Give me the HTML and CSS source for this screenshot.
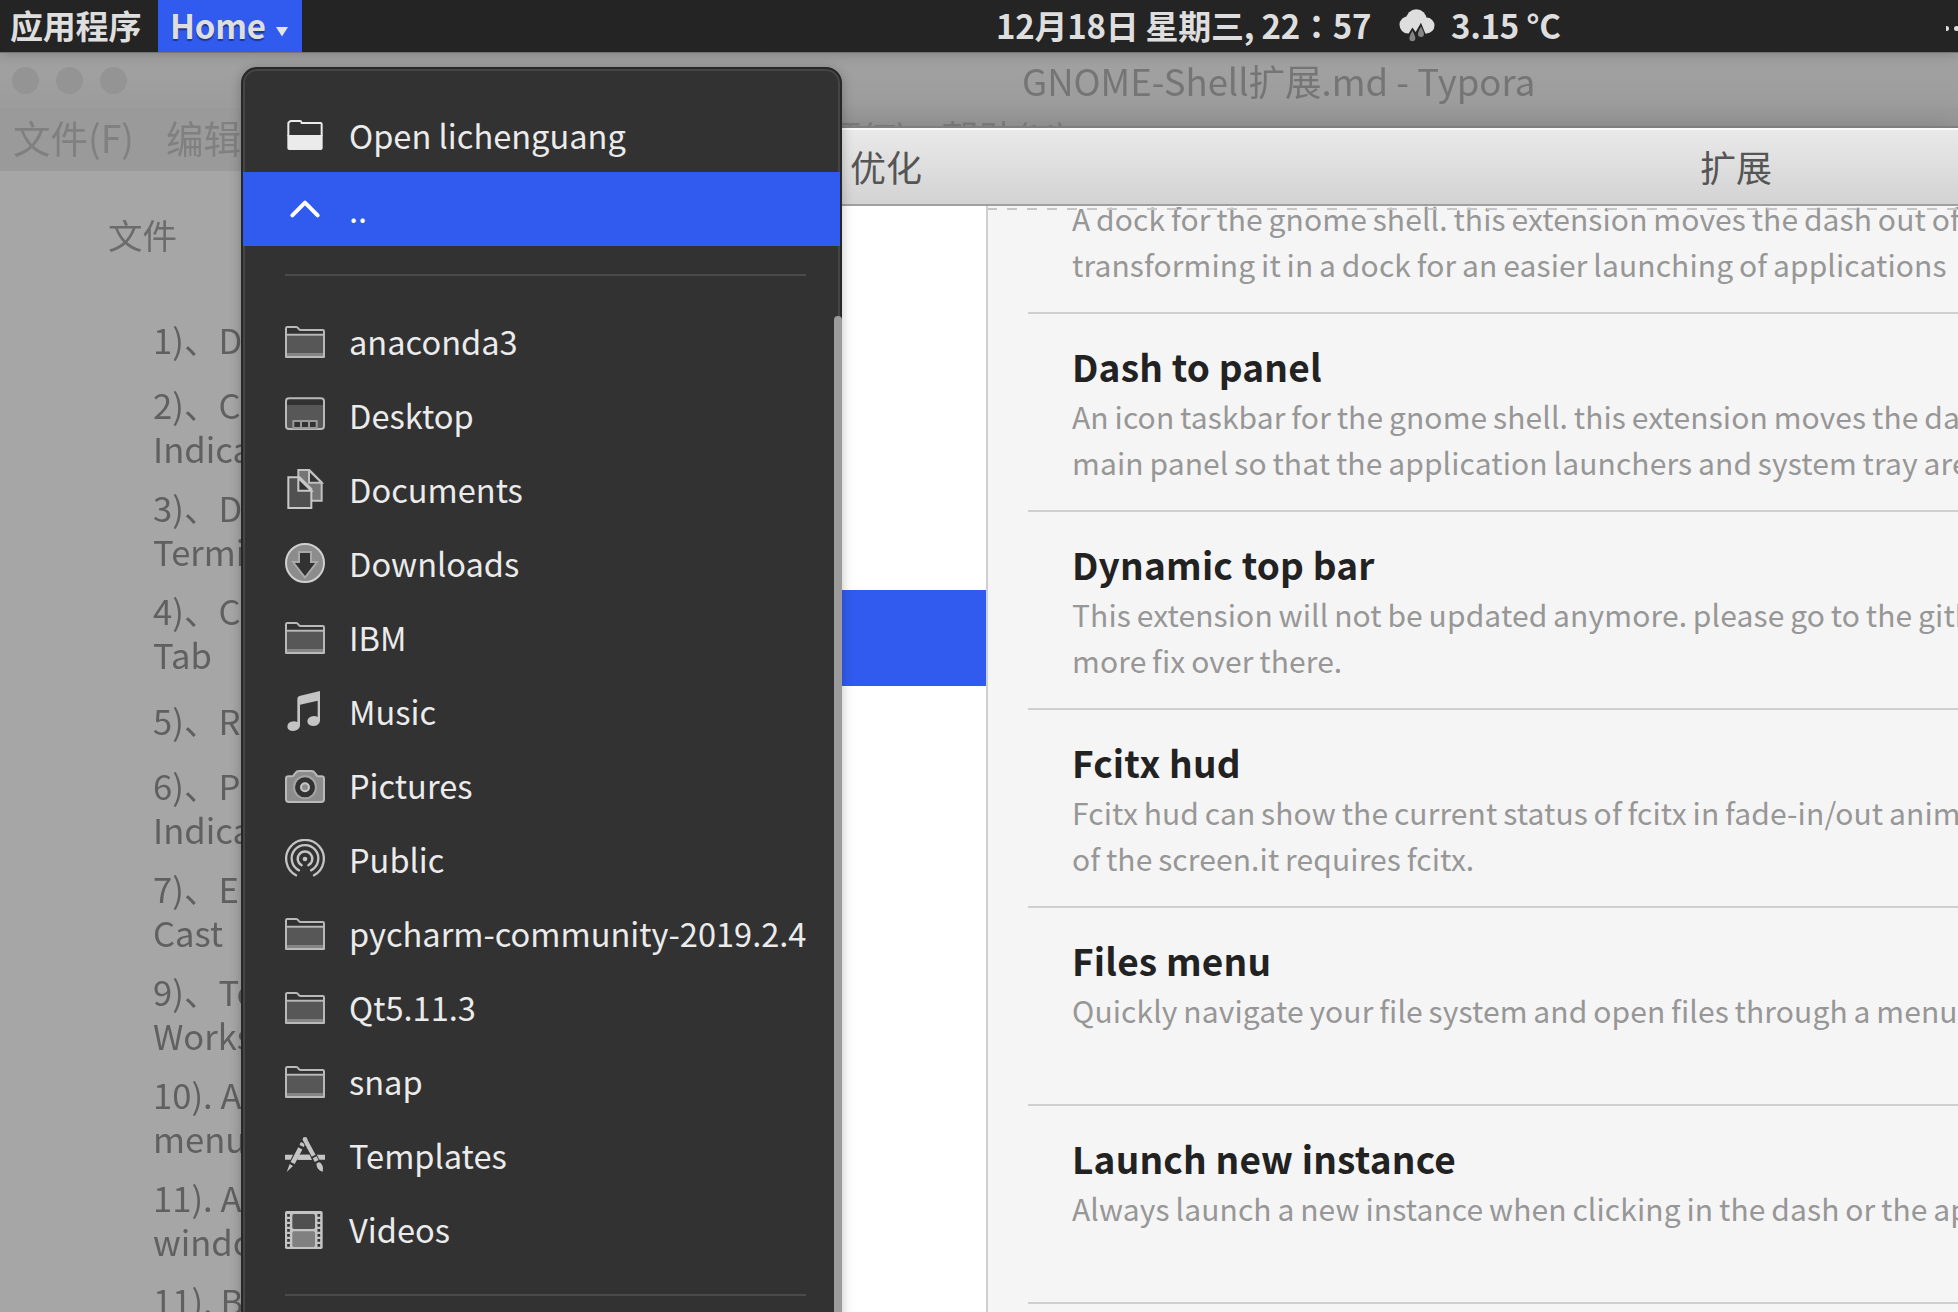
FILE: index.html
```html
<!DOCTYPE html>
<html lang="zh-CN"><head><meta charset="utf-8"><title>Desktop</title><link rel="stylesheet" href="styles.css"></head>
<body>
<svg class="defs" aria-hidden="true"><defs>
<symbol id="folder" viewBox="0 0 120 120"><path d="M6 44H114V97H6Z" fill="#575757"/><path d="M6 96H114V105H6Z" fill="#858585"/><path d="M3 108V22Q3 18 7 18H33Q38 18 40 22Q42 27 47 27H113Q117 27 117 31V108ZM3 41H117M3 108H117" fill="none" stroke="#b9b9b9" stroke-width="6" stroke-linejoin="round"/></symbol>
</defs></svg>
<div class="desktop">
  <header class="panel">
    <span class="panel-item apps">应用程序</span>
    <span class="panel-item home">Home<svg class="caret" viewBox="0 0 12 10"><path d="M0 0H12L6 9.500Z" fill="#e4e4ee"/></svg></span>
    <div class="clock"><span class="date">12月18日 星期三, 22<span class="colon" lang="ja">：</span>57</span>
      <svg class="weather" viewBox="0 0 108 100"><g fill="#dedede"><circle cx="27" cy="48" r="26"/><circle cx="52" cy="32" r="31"/><circle cx="83" cy="50" r="24"/><path d="M27 45H83V74H27Z"/></g><path d="M25 80L40 56L50 70L66 42L80 76L74 90H30Z" fill="#242424"/><path d="M40 66Q31 82 31 89A9 9 0 0 0 49 89Q49 82 40 66ZM66 53Q57 69 57 76A9 9 0 0 0 75 76Q75 69 66 53Z" fill="#858585"/></svg>
      <span class="temp">3.15 °C</span></div>
    <span class="tray"><i></i><i></i></span>
  </header>
  <section class="editor">
    <div class="editor-title"><span class="dots"><i></i><i></i><i></i></span><span class="editor-name">GNOME-Shell扩展.md - Typora</span></div>
    <div class="editor-menu"><span>文件(F)</span><span>编辑(E)</span><span>段落(P)</span><span>格式(O)</span><span>视图(V)</span><span>主题(T)</span><span>帮助(H)</span></div>
    <div class="outline"><h2>文件</h2>
      <ul><li>1)、D</li><li>2)、C<br>Indica</li><li>3)、D<br>Termi</li><li>4)、C<br>Tab</li><li>5)、R</li><li>6)、P<br>Indica</li><li>7)、E<br>Cast</li><li>9)、To<br>Works</li><li>10). A<br>menu</li><li>11). A<br>windo</li><li>11). B</li></ul>
    </div>
  </section>
  <section class="tweaks">
    <div class="tweaks-head"><span class="app-name">优化</span><span class="page-name">扩展</span></div>
    <div class="tweaks-body">
      <nav class="side"><div class="side-selected"></div></nav>
      <main class="extensions">
        <article><p>A dock for the gnome shell. this extension moves the dash out of<br>transforming it in a dock for an easier launching of applications</p></article>
        <article><h3>Dash to panel</h3><p>An icon taskbar for the gnome shell. this extension moves the dash<br>main panel so that the application launchers and system tray are</p></article>
        <article><h3>Dynamic top bar</h3><p>This extension will not be updated anymore. please go to the github<br>more fix over there.</p></article>
        <article><h3>Fcitx hud</h3><p>Fcitx hud can show the current status of fcitx in fade-in/out anima<br>of the screen.it requires fcitx.</p></article>
        <article><h3>Files menu</h3><p>Quickly navigate your file system and open files through a menu</p></article>
        <article><h3>Launch new instance</h3><p>Always launch a new instance when clicking in the dash or the app</p></article>
      </main>
    </div>
  </section>
  <aside class="menu">
    <div class="row"><svg viewBox="0 0 120 120"><path d="M7 60H113V99Q113 105 107 105H13Q7 105 7 99Z" fill="#ebebeb"/><path d="M10 64V25Q10 22 13 21Q15 18 19 18H46Q49 18 50 24H107Q110 24 110 28V64" fill="none" stroke="#ebebeb" stroke-width="6"/></svg><span>Open lichenguang</span></div>
    <div class="row selected"><svg viewBox="0 0 120 120"><path d="M22 79L60 41L98 79" fill="none" stroke="#fff" stroke-width="12" stroke-linecap="round" stroke-linejoin="round"/></svg><span>..</span></div>
    <hr>
    <div class="row"><svg><use href="#folder"/></svg><span>anaconda3</span></div>
    <div class="row"><svg viewBox="0 0 120 120"><path d="M6 30H114V101H6Z" fill="#575757"/><rect x="3" y="10" width="114" height="92" rx="9" fill="none" stroke="#b9b9b9" stroke-width="6"/><rect x="25" y="78" width="70" height="21" fill="#323232" stroke="#999" stroke-width="6"/><path d="M48 80V98M72 80V98" stroke="#999" stroke-width="6"/></svg><span>Desktop</span></div>
    <div class="row"><svg viewBox="0 0 120 120"><path d="M40 3H73L110 40V95H40Z" fill="#757575" stroke="#c0c0c0" stroke-width="6"/><path d="M72 4V41H110Z" fill="#323232" stroke="#c0c0c0" stroke-width="6"/><path d="M10 25H44L79 60V117H10Z" fill="#505050" stroke="#c8c8c8" stroke-width="6"/><path d="M40 27V65H79Z" fill="#323232" stroke="#c8c8c8" stroke-width="6"/></svg><span>Documents</span></div>
    <div class="row"><svg viewBox="0 0 120 120"><circle cx="60" cy="60" r="57" fill="#8c8c8c" stroke="#d0d0d0" stroke-width="6"/><path d="M42 27H78V57H96L60 104L24 57H42Z" fill="#323232" stroke="#a9a9a9" stroke-width="6"/></svg><span>Downloads</span></div>
    <div class="row"><svg><use href="#folder"/></svg><span>IBM</span></div>
    <div class="row"><svg viewBox="0 0 120 120"><path d="M37 24Q37 17 43 15L105 0V90Q102 105 84 105Q67 103 67 90Q69 76 87 75Q94 75 98 78V29L45 41V105Q42 119 24 120Q8 119 7 107Q8 92 26 91Q33 91 37 93Z" fill="#c4c4c4"/></svg><span>Music</span></div>
    <div class="row"><svg viewBox="0 0 120 120"><path d="M3 103V41Q3 34 11 34H21Q24 34 26 31L31 24Q35 18 42 18H79Q86 18 90 24L95 31Q97 34 100 34H109Q117 34 117 41V103Q117 111 109 111H11Q3 111 3 103Z" fill="#8c8c8c" stroke="#b9b9b9" stroke-width="6"/><circle cx="60" cy="67" r="33" fill="#323232" stroke="#a5a5a5" stroke-width="6"/><circle cx="60" cy="67" r="12" fill="#8c8c8c" stroke="#c8c8c8" stroke-width="6"/></svg><span>Pictures</span></div>
    <div class="row"><svg viewBox="0 0 120 120"><circle cx="60" cy="60" r="7" fill="#c4c4c4"/><g fill="none" stroke="#c4c4c4" stroke-width="7" stroke-linecap="round"><path d="M50 79A22 22 0 1 1 70 79"/><path d="M42 94A40 40 0 1 1 78 94"/><path d="M33 109A56.500 56.500 0 1 1 87 109"/></g></svg><span>Public</span></div>
    <div class="row"><svg><use href="#folder"/></svg><span>pycharm-community-2019.2.4</span></div>
    <div class="row"><svg><use href="#folder"/></svg><span>Qt5.11.3</span></div>
    <div class="row"><svg><use href="#folder"/></svg><span>snap</span></div>
    <div class="row"><svg viewBox="0 0 120 120"><path d="M0 59H120V74H0Z" fill="#c4c4c4"/><g fill="none" stroke-linecap="butt"><path d="M53 22L18 95M60 14L98 86" stroke="#323232" stroke-width="20"/><path d="M54 24L50 33M46 40L23 84" stroke="#c4c4c4" stroke-width="14"/><path d="M60 14L88 65" stroke="#323232" stroke-width="18"/><path d="M60 14L86 62" stroke="#c4c4c4" stroke-width="13"/><path d="M89 67L95 78" stroke="#c4c4c4" stroke-width="13"/><path d="M42 59H74L80 74H36Z" fill="#c4c4c4"/></g><circle cx="60" cy="13" r="7" fill="#c4c4c4"/><path d="M14 87L24 93L5 111ZM94 87Q100 79 107 84Q117 94 113 110Q96 106 94 87Z" fill="#c4c4c4"/></svg><span>Templates</span></div>
    <div class="row"><svg viewBox="0 0 120 120"><rect x="0" y="6" width="113" height="114" rx="5" fill="#c4c4c4"/><rect x="22" y="15" width="68" height="45" rx="5" fill="#505050"/><rect x="22" y="67" width="68" height="47" rx="5" fill="#808080"/><path d="M10.500 15V117M101.500 15V117" stroke="#323232" stroke-width="8" stroke-dasharray="8 7"/></svg><span>Videos</span></div>
    <hr>
    <div class="scrollbar"></div>
  </aside>
</div>
</body></html>
```

FILE: styles.css
```css
* { box-sizing: border-box; }
body { margin: 0; overflow: hidden; font-family: "Noto Sans CJK SC", sans-serif; }
h2, h3, p, ul { margin: 0; padding: 0; font-weight: 400; }
i { display: block; border-radius: 50%; }
.defs { position: absolute; width: 0; height: 0; }
.desktop { position: relative; width: 1958px; height: 1312px; overflow: hidden; background: #a6a6a6; }

.panel { position: absolute; inset: 0 0 auto; z-index: 5; height: 52px; display: flex; align-items: center; background: #242424; color: #dedede; font-size: 33px; font-weight: 700; line-height: 50px; box-shadow: 0 1px 0 #747474, 0 2px 12px rgba(0,0,0,.22); white-space: nowrap; }
.panel-item { height: 52px; }
.apps { width: 158px; padding-left: 10px; letter-spacing: -.2px; }
.home { width: 144px; padding-left: 12px; background: #315bef; text-shadow: 0 2px 1px rgba(0,0,0,.4); letter-spacing: -.2px; display: flex; align-items: flex-start; }
.caret { width: 12px; height: 10px; margin: 27px 0 0 10px; }
.clock { display: flex; align-items: center; height: 52px; margin-left: 694px; }
.date { width: 374px; letter-spacing: -.25px; margin-top: -2px; }
.colon { font-family: "Noto Sans CJK JP", sans-serif; }
.weather { width: 36px; height: 33px; margin: -1px 0 0 29px; }
.temp { margin: -2px 0 0 16px; letter-spacing: -.3px; }
.tray { display: flex; gap: 5px; margin-left: auto; margin-top: 5px; width: 12px; overflow: hidden; }
.tray i { width: 5px; height: 5px; background: #dedede; flex: none; }
.tray i:first-child { width: 3px; border-radius: 0 3px 3px 0; }

.editor { position: absolute; inset: 52px 0 0; background: #a6a6a6; color: #606060; }
.editor-title { height: 56px; display: flex; align-items: center; background: linear-gradient(#a2a2a2, #9c9c9c); }
.dots { display: flex; gap: 17px; padding-left: 12px; width: 1022px; filter: blur(.6px); }
.dots i { width: 27px; height: 27px; background: #949494; }
.editor-name { font-size: 36.5px; line-height: 56px; color: #757575; filter: blur(.7px); white-space: nowrap; padding-top: 2px; }
.editor-menu { height: 63px; display: flex; align-items: center; padding: 0 0 7px 13px; background: #9a9a9a; font-size: 37.5px; color: #808080; filter: blur(.7px); white-space: nowrap; }
.editor-menu span { width: 155px; }
.editor-menu span:first-child { width: 153px; }
.outline { padding-left: 153px; font-size: 34.6px; line-height: 44px; filter: blur(.7px); }
.outline h2 { margin: 39px 0 52px -45px; font-size: 34.5px; line-height: 48px; color: #6c6c6c; }
.outline ul { list-style: none; }
.outline li { min-height: 57px; margin-bottom: 15px; display: flex; flex-direction: column; justify-content: center; white-space: nowrap; }
.outline li:last-child { justify-content: flex-start; }

.tweaks { position: absolute; inset: 126px 0 0 800px; background: #fff; border-top: 2px solid #7f7f7f; display: flex; flex-direction: column; box-shadow: 0 0 24px rgba(0,0,0,.16); }
.tweaks-head { height: 78px; flex: none; display: flex; align-items: center; padding-bottom: 2px; border-top: 2px solid #fafafa; border-bottom: 2px solid #a0a0a0; background: linear-gradient(#e9e9e9, #d3d3d3); color: #555; font-size: 36px; }
.app-name { width: 900px; padding-left: 50px; }
.tweaks-body { flex: 1; display: flex; min-height: 0; }
.side { width: 186px; padding-top: 384px; }
.side-selected { height: 96px; background: #315bef; }
.extensions { position: relative; flex: 1; min-width: 0; overflow: hidden; background: #f5f5f5; border-left: 2px solid #cfcfcf; padding-left: 40px; }
.extensions::before { content: ""; position: absolute; left: 0; right: 0; top: 2px; height: 2px; background: repeating-linear-gradient(90deg, #c6c6c6 0 9px, transparent 9px 19px, #c6c6c6 19px 20px); }
.extensions article { display: flow-root; height: 198px; padding: 26px 0 0 44px; border-bottom: 2px solid #cfcfcf; white-space: nowrap; }
.extensions article:first-child { height: 108px; padding-top: 0; }
.extensions article:first-child p { margin-top: -11px; }
.extensions h3 { font-size: 37px; line-height: 53px; font-weight: 700; color: #222; letter-spacing: .2px; }
.extensions p { font-size: 30px; line-height: 46px; color: #979797; letter-spacing: .12px; word-spacing: -1.1px; }

.menu { position: absolute; left: 241px; top: 67px; width: 601px; height: 1300px; z-index: 4; padding: 29px 0 0; background: #323232; border: 2px solid #272727; border-radius: 16px 16px 0 0; box-shadow: inset 0 0 0 2px #454545, 0 2px 12px rgba(0,0,0,.25); color: #ebebeb; }
.row { height: 74px; display: flex; align-items: center; gap: 24px; padding-left: 42px; font-size: 32.6px; line-height: 74px; white-space: nowrap; }
.row svg { width: 40px; height: 40px; flex: none; }
.selected { background: #315bef; color: #fff; }
.menu hr { height: 2px; margin: 28px 34px 28px 42px; border: 0; background: #4a4a4a; }
.scrollbar { position: absolute; right: -2px; top: 247px; bottom: 0; width: 8px; background: #9b9b9b; border-radius: 4px 4px 0 0; }
```
